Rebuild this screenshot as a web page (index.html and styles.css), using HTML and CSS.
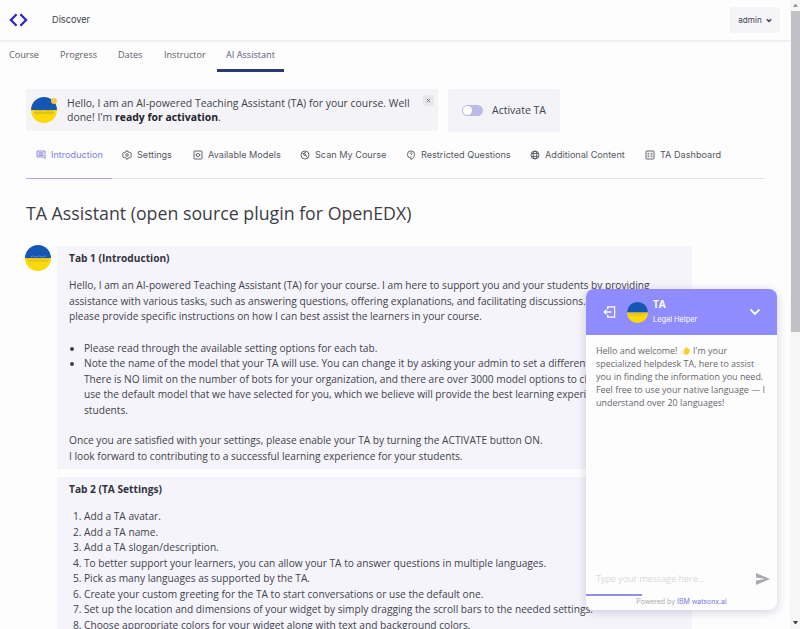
FILE: index.html
```html
<!DOCTYPE html>
<html lang="en">
<head>
<meta charset="utf-8">
<title>TA Assistant</title>
<link rel="stylesheet" href="styles.css">
</head>
<body>
<div class="page">
  <div class="content">
    <header class="topbar">
      <svg class="logo" viewBox="0 0 20 14"><path d="M8 1L2 7l6 6M12 1l6 6-6 6"/></svg>
      <span class="discover">Discover</span>
      <button class="admin">admin <svg viewBox="0 0 6 5"><path d="M.8 1.2L3 3.4l2.2-2.2"/></svg></button>
    </header>
    <nav class="course-nav">
      <a class="n1">Course</a><a class="n2">Progress</a><a class="n3">Dates</a><a class="n4">Instructor</a><a class="n5 active">AI Assistant</a>
    </nav>
    <main>
      <section class="status">
        <div class="notice">
          <svg class="avatar" viewBox="0 0 26 26"><path d="M0 13a13 13 0 0 1 26 0z" fill="#1556b5"/><path d="M0 13a13 13 0 0 0 26 0z" fill="#fbd90b"/><path d="M4 14l3-1 3 1 3-1 3 1 3-1 3 1M3 16h20" stroke="#a99c3c" stroke-width=".7" fill="none"/><circle cx="23" cy="4" r="3" fill="#f4c744"/></svg>
          <p>Hello, I am an AI-powered Teaching Assistant (TA) for your course. Well<br>done! I'm <b>ready for activation</b>.</p>
          <button class="close"><svg viewBox="0 0 5 5"><path d="M.8.8l3.4 3.4M4.2.8L.8 4.2"/></svg></button>
        </div>
        <div class="activate"><i class="switch"></i><span>Activate TA</span></div>
      </section>
      <nav class="tabs">
        <a class="t1 current"><svg viewBox="0 0 10 10"><path d="M1 1h8v7.6L7.4 7H1zM2.5 2.8h5M2.5 4.1h5M2.5 5.4h5"/></svg>Introduction</a>
        <a class="t2"><svg viewBox="0 0 10 10"><path d="M4 1h2l.3 1.2 1.1.5L8.6 2.4l.9 1.6-.8 1 .8 1-.9 1.6-1.2-.3-1.1.5L6 9H4l-.3-1.2-1.1-.5-1.2.3L.5 6l.8-1-.8-1 .9-1.6 1.2.3 1.1-.5z"/><circle cx="5" cy="5" r="1.3"/></svg>Settings</a>
        <a class="t3"><svg viewBox="0 0 10 10"><rect x="1" y="1" width="8" height="8" rx=".6"/><circle cx="5" cy="5" r="1.6"/><path d="M2.5 5h1M6.5 5h1"/></svg>Available Models</a>
        <a class="t4"><svg viewBox="0 0 10 10"><circle cx="5" cy="5" r="4"/><path d="M3 3.5l2 .3 1.2 1.3-.8.8L4 5zM5.5 5.500L7.500 7.500M4 3l2-.3"/></svg>Scan My Course</a>
        <a class="t5"><svg viewBox="0 0 10 10"><path d="M5 9.500V8.100A3.600 3.600 0 1 1 8.600 4.500C8.600 7 6.500 8.700 5 9.500zM3.900 3.600c.2-1.300 2.300-1.100 2.200.1 0 .8-1.100.8-1.100 1.600M5 6.200v.6"/></svg>Restricted Questions</a>
        <a class="t6"><svg viewBox="0 0 10 10"><circle cx="5" cy="5" r="4"/><ellipse cx="5" cy="5" rx="1.8" ry="4"/><path d="M1.300 3.600h7.400M1.300 6.400h7.400"/></svg>Additional Content</a>
        <a class="t7"><svg viewBox="0 0 10 10"><rect x="1" y="1" width="8" height="8" rx=".6"/><path d="M2.600 3.300h1.600M5.600 3.300h1.800M2.600 5h1.600M5.600 5h1.800M2.600 6.700h1.600M5.600 6.700h1.800"/></svg>TA Dashboard</a>
      </nav>
      <h1>TA Assistant (open source plugin for OpenEDX)</h1>
      <div class="guide">
        <svg class="avatar" viewBox="0 0 26 26"><path d="M0 13a13 13 0 0 1 26 0z" fill="#1556b5"/><path d="M0 13a13 13 0 0 0 26 0z" fill="#fbd90b"/><path d="M5 12l3-1 3 1 3-1 3 1 4-1" stroke="#6d96c5" stroke-width=".7" fill="none"/><path d="M2 14h22M3 16h20" stroke="#b9a536" stroke-width=".7" stroke-dasharray="2 .6" fill="none"/></svg>
        <div class="cards">
          <section class="card first">
            <h2>Tab 1 (Introduction)</h2>
            <p>Hello, I am an AI-powered Teaching Assistant (TA) for your course. I am here to support you and your students by providing<br>assistance with various tasks, such as answering questions, offering explanations, and facilitating discussions.<br>please provide specific instructions on how I can best assist the learners in your course.</p>
            <ul>
              <li>Please read through the available setting options for each tab.</li>
              <li>Note the name of the model that your TA will use. You can change it by asking your admin to set a different<br>There is NO limit on the number of bots for your organization, and there are over 3000 model options to choose<br>use the default model that we have selected for you, which we believe will provide the best learning experience<br>students.</li>
            </ul>
            <p>Once you are satisfied with your settings, please enable your TA by turning the ACTIVATE button ON.<br>I look forward to contributing to a successful learning experience for your students.</p>
          </section>
          <section class="card second">
            <h2>Tab 2 (TA Settings)</h2>
            <ol>
              <li>Add a TA avatar.</li>
              <li>Add a TA name.</li>
              <li>Add a TA slogan/description.</li>
              <li>To better support your learners, you can allow your TA to answer questions in multiple languages.</li>
              <li>Pick as many languages as supported by the TA.</li>
              <li>Create your custom greeting for the TA to start conversations or use the default one.</li>
              <li>Set up the location and dimensions of your widget by simply dragging the scroll bars to the needed settings.</li>
              <li>Choose appropriate colors for your widget along with text and background colors.</li>
            </ol>
          </section>
        </div>
      </div>
    </main>
  </div>
  <div class="scrollbar"><i class="up"></i><i class="thumb"></i><i class="down"></i></div>
</div>
<aside class="chat">
  <header>
    <svg class="exit" viewBox="0 0 14 14"><path d="M5 4V1.500h7.500v11H5V10M9 7H1.300M3.800 4.500L1.300 7l2.500 2.500"/></svg>
    <svg class="avatar" viewBox="0 0 26 26"><path d="M0 13a13 13 0 0 1 26 0z" fill="#1556b5"/><path d="M0 13a13 13 0 0 0 26 0z" fill="#fbd90b"/><path d="M3 14h20M3 16h20" stroke="#b9a536" stroke-width=".8" stroke-dasharray="2 .6" fill="none"/></svg>
    <div class="who"><b>TA</b><span>Legal Helper</span></div>
    <svg class="chev" viewBox="0 0 12 8"><path d="M1.500 1.500L6 6l4.500-4.500"/></svg>
  </header>
  <p class="msg">Hello and welcome! <svg class="hand" viewBox="0 0 10 9"><path d="M3.500 3.500L6.500.5l.5 2 2 .5v4L7 8.500H4L3 6.500z" fill="#fccb2d"/><path d="M.8 5.500l1.500-.8M1 7l1.200-.3" stroke="#f3cf70" stroke-width=".8"/></svg> I'm your<br>specialized helpdesk TA, here to assist<br>you in finding the information you need.<br>Feel free to use your native language — I<br>understand over 20 languages!</p>
  <div class="compose"><span>Type your message here...</span><svg viewBox="0 0 14 12"><path d="M0 0l14 6L0 12V7.500L9 6 0 4.500z"/></svg></div>
  <div class="powered"><i class="bar"></i><span>Powered by <b>IBM watsonx.ai</b></span></div>
</aside>
</body>
</html>
```
FILE: styles.css
```css
* { box-sizing: border-box; }
body { margin: 0; width: 800px; height: 629px; overflow: hidden; background: #fdfdfe; color: #42424b; font: 10.16px/15.5px "Open Sans", sans-serif; }
svg { fill: none; stroke: currentColor; display: block; flex: none; }
p, h1, h2, ul, ol { margin: 0; }
button { border: 0; padding: 0; }
.page { display: flex; height: 629px; overflow: hidden; }
.content { width: 790px; flex: none; }
.topbar { display: flex; align-items: center; height: 42px; padding: 0 10px 0 9px; border-bottom: 2px solid #f0f0f2; }
.logo { width: 19px; height: 14px; color: #3024cb; stroke-width: 2.4; }
.discover { font: 9.2px/14px Inter, sans-serif; margin-left: 24px; }
.admin { margin-left: auto; width: 50px; height: 26px; background: #f5f5f7; border-radius: 3px; display: flex; align-items: center; justify-content: center; gap: 4px; font: 8.2px/12px Inter, sans-serif; color: #45415f; }
.admin svg { width: 6px; height: 5px; stroke-width: 1.5; }
.course-nav { display: flex; height: 30px; font-size: 9.1px; line-height: 25px; color: #5b5b62; }
.course-nav a { white-space: nowrap; }
.n1 { margin-left: 9px; width: 51px; }
.n2 { width: 58px; }
.n3 { width: 46px; }
.n4 { width: 53px; }
.n5 { width: 67px; text-align: center; border-bottom: 3px solid #2d3972; }
.course-nav .active { color: #595878; }
main { padding: 17px 25px 0 26px; }
.status { display: flex; gap: 10px; height: 44px; }
.notice { display: flex; width: 412px; height: 42px; background: #f4f4f8; padding: 7px 4px 0 5px; border-radius: 2px; }
.avatar { width: 26px; height: 26px; stroke: none; }
.notice .avatar { margin-top: 1px; }
.notice p { margin-left: 10px; font-size: 10.45px; line-height: 14px; white-space: nowrap; }
.notice b { color: #24242b; }
.close { margin-left: auto; margin-top: -1px; width: 11px; height: 11px; background: #e8e8ec; border-radius: 2px; display: grid; place-items: center; color: #62626a; }
.close svg { width: 5px; height: 5px; stroke-width: .8; }
.activate { width: 112px; height: 43px; background: #f4f3f8; border-radius: 3px; display: flex; align-items: center; padding-left: 14px; gap: 9px; font-size: 10.5px; white-space: nowrap; }
.switch { width: 21px; height: 11px; border-radius: 6px; background: #bcbbe8; padding: 1px; }
.switch::before { content: ""; display: block; width: 9px; height: 9px; border-radius: 50%; background: #fff; }
.tabs { display: flex; height: 46px; border-bottom: 1px solid #e4e4ea; font: 9.15px/43px Inter, sans-serif; color: #56565e; }
.tabs a { display: flex; gap: 5px; white-space: nowrap; height: 46px; }
.tabs svg { width: 10px; height: 10px; margin-top: 17px; stroke-width: .9; }
.t1 { width: 86px; padding-left: 10px; }
.tabs .current { color: #8080dd; border-bottom: 1px solid #a9a9ee; }
.t2 { width: 81px; padding-left: 10px; }
.t3 { width: 107px; }
.t4 { width: 106px; }
.t5 { width: 124px; }
.t6 { width: 115px; }
h1 { margin-top: 21px; font-size: 17.75px; line-height: 26px; font-weight: 400; color: #3e3e47; white-space: nowrap; }
.guide { display: flex; gap: 6px; margin-top: 20px; }
.guide > .avatar { margin-top: -1px; margin-left: -1px; }
.cards { width: 635px; flex: none; }
.card { background: #f5f4fb; padding: 4px 12px 0 12px; white-space: nowrap; }
.first { height: 223px; margin-bottom: 8px; }
.second { height: 190px; }
h2 { font-size: 10.16px; line-height: 16px; color: #33333d; }
.card h2 + * { margin-top: 12px; }
ul, ol { padding-left: 15px; }
.first ul { margin: 16px 0 15px; }
.scrollbar { width: 10px; flex: none; background: #f6f6f7; display: flex; flex-direction: column; align-items: center; }
.up, .down { border: 2px solid transparent; width: 5px; }
.up { border-top: 0; border-bottom: 3px solid #99999d; margin: 4px 0; }
.thumb { width: 9px; height: 321px; background: #c1c0c4; }
.down { margin: auto 0 5px; border-bottom: 0; border-top: 3px solid #444; }
.chat { position: absolute; left: 586px; top: 289px; width: 191px; height: 321px; background: #fdfdfe; border-radius: 8px; overflow: hidden; box-shadow: 0 2px 10px rgba(70,65,120,.24); display: flex; flex-direction: column; }
.chat header { height: 46px; flex: none; background: #8e8cfe; color: #fff; display: flex; align-items: center; padding: 0 16px 0 17px; }
.exit { width: 13px; height: 14px; stroke-width: 1.4; }
.chat header .avatar { width: 21px; height: 21px; margin-left: 11px; }
.who { margin-left: 5px; display: flex; flex-direction: column; line-height: 14px; }
.who b { font-size: 10px; line-height: 15px; margin-top: -1px; }
.who span { font: 7.4px/15px Inter, sans-serif; }
.chev { width: 12px; height: 8px; margin-left: auto; stroke-width: 1.8; }
.msg { padding: 10px 10px 0; font-size: 8.93px; line-height: 12.9px; color: #65656b; white-space: nowrap; }
.hand { display: inline-block; width: 11px; height: 9px; vertical-align: -1px; stroke: none; }
.compose { margin-top: auto; height: 30px; display: flex; align-items: center; justify-content: space-between; padding: 0 7px 0 10px; font-size: 8.95px; color: #d8d8dc; white-space: nowrap; }
.compose svg { width: 14px; height: 12px; fill: #aaa9af; stroke: none; }
.powered { height: 16px; text-align: center; font: 6.95px/12px Inter, sans-serif; color: #aaaab0; }
.bar { display: block; width: 56px; height: 2px; background: #918fec; }
.powered b { font-weight: 400; color: #7978e8; }
```
